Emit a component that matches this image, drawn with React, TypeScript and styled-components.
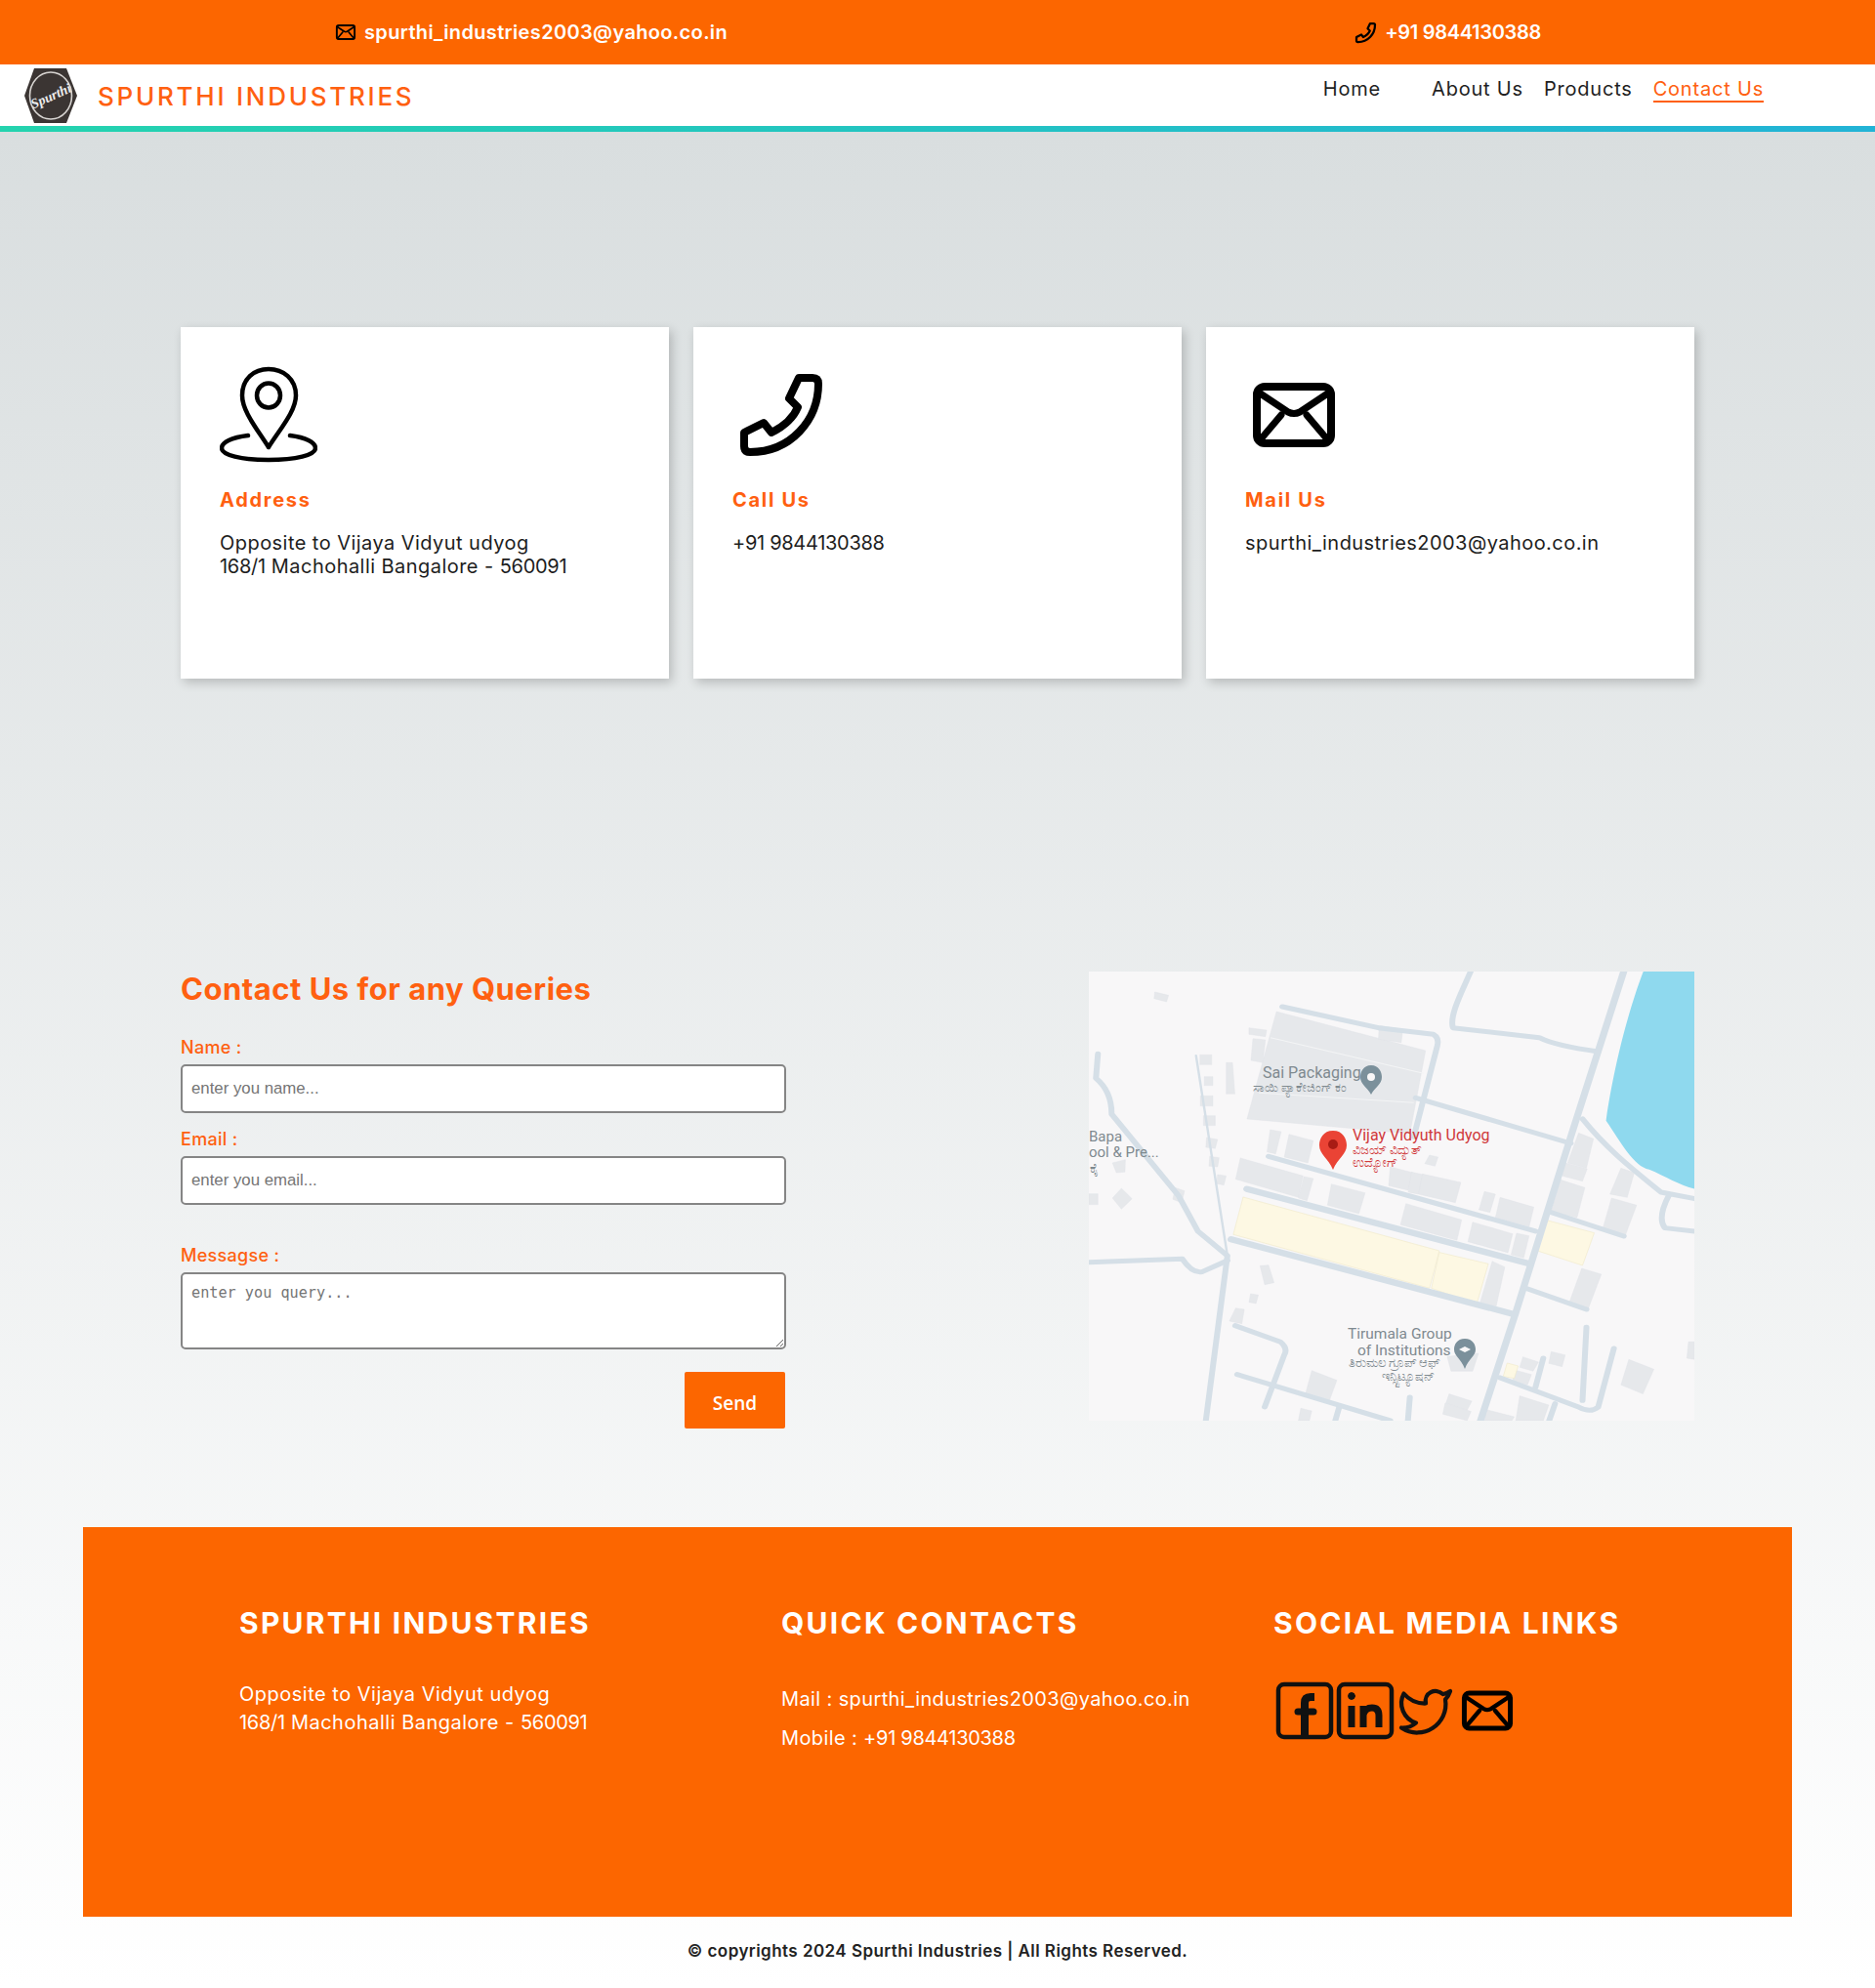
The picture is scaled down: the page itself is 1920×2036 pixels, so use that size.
import styled, { createGlobalStyle } from "styled-components";

const ORANGE = "#fc6600";
const TITLE_ORANGE = "#ff6010";
const BODY_FONT = `Inter, "Open Sans", sans-serif`;

const GlobalStyle = createGlobalStyle`
  html, body {
    margin: 0;
    padding: 0;
  }
  body {
    font-family: ${BODY_FONT};
    color: #1c1c1c;
    background: #fff;
  }
  * {
    box-sizing: border-box;
  }
`;

const Page = styled.div`
  width: 1920px;
  height: 2036px;
  overflow: hidden;
  display: flex;
  flex-direction: column;
`;

// the numbers run narrower than the words in the original face
const Digits = styled.span`
  letter-spacing: -0.3px;
`;

const TopBar = styled.div`
  height: 66px;
  background: ${ORANGE};
  display: flex;
  align-items: center;
  justify-content: space-between;
  padding: 0 342px 0 342px;
`;

const TopItem = styled.a`
  display: flex;
  align-items: center;
  gap: 7px;
  color: #fff;
  font-size: 20px;
  font-weight: 600;
  letter-spacing: 0.35px;
`;

const NavBar = styled.nav`
  height: 69px;
  background: #fff;
  border-bottom: 6px solid;
  border-image: linear-gradient(90deg, #24d3ae, #22b3d6) 1;
  display: flex;
  align-items: flex-start;
  justify-content: space-between;
  padding: 3px 114px 0 25px;
`;

const Brand = styled.div`
  display: flex;
  align-items: center;
  gap: 21px;
`;

const BrandName = styled.div`
  color: ${TITLE_ORANGE};
  font-size: 26px;
  font-weight: 500;
  letter-spacing: 2.75px;
`;

const NavLinks = styled.ul`
  list-style: none;
  margin: 0;
  padding: 10px 0 0;
  display: flex;
  gap: 21px;
`;

const NavLink = styled.li<{ $active?: boolean; $wide?: boolean }>`
  font-size: 20px;
  font-weight: 400;
  line-height: 24px;
  letter-spacing: 0.8px;
  color: ${(p) => (p.$active ? TITLE_ORANGE : "#1f1f1f")};
  border-bottom: 2px solid ${(p) => (p.$active ? TITLE_ORANGE : "transparent")};
  margin-right: ${(p) => (p.$wide ? "31px" : "0")};
`;

const Main = styled.main`
  flex: 1;
  display: flex;
  flex-direction: column;
  background: linear-gradient(180deg, #d9dedf 0%, #ffffff 100%);
  padding-top: 200px;
`;

const Cards = styled.section`
  display: grid;
  grid-template-columns: repeat(3, 500px);
  gap: 25px;
  padding-left: 185px;
`;

const Card = styled.article`
  height: 360px;
  background: #fff;
  box-shadow: 3px 4px 10px rgba(0, 0, 0, 0.2);
  padding: 40px;
`;

const CardTitle = styled.h3`
  margin: 23px 0 0;
  color: ${TITLE_ORANGE};
  font-size: 20px;
  font-weight: 700;
  line-height: 28px;
  letter-spacing: 1.7px;
`;

const CardText = styled.p`
  margin: 18px 0 0;
  font-size: 20px;
  font-weight: 400;
  line-height: 24px;
  letter-spacing: 0.45px;
  color: #1d1d1d;
`;

const IconBox = styled.svg<{ $tone?: string }>`
  display: block;
  fill: none;
  stroke: ${(p) => p.$tone ?? "#000"};
  stroke-linejoin: round;
  stroke-linecap: round;
`;

const QuerySection = styled.section`
  display: flex;
  justify-content: space-between;
  align-items: flex-start;
  margin-top: 300px;
  padding: 0 185px;
`;

const QueryForm = styled.form`
  width: 620px;
  display: flex;
  flex-direction: column;
`;

const QueryTitle = styled.h2`
  margin: 0 0 30px;
  color: ${TITLE_ORANGE};
  font-size: 31px;
  font-weight: 700;
  line-height: 36px;
  letter-spacing: 0.5px;
`;

const FieldLabel = styled.label<{ $gap?: number }>`
  color: ${TITLE_ORANGE};
  font-size: 18px;
  font-weight: 500;
  line-height: 24px;
  letter-spacing: 0.3px;
  margin-top: ${(p) => p.$gap ?? 0}px;
  margin-bottom: 5px;
`;

const TextField = styled.input`
  width: 620px;
  height: 50px;
  border: 2px solid #858585;
  border-radius: 5px;
  background: #fff;
  padding: 0 9px;
  font-family: "Liberation Sans", Arial, sans-serif;
  font-size: 16.8px;
  outline: none;
  &::placeholder {
    color: #757575;
  }
`;

const TextBox = styled.textarea`
  width: 620px;
  height: 79px;
  display: block;
  border: 2px solid #858585;
  border-radius: 5px;
  background: #fff;
  padding: 10px 9px;
  font-family: "DejaVu Sans Mono", monospace;
  font-size: 15.2px;
  line-height: 19px;
  outline: none;
  &::placeholder {
    color: #757575;
  }
`;

const SendButton = styled.button`
  align-self: flex-end;
  width: 103px;
  height: 58px;
  margin: 23px 1px 0 0;
  border: none;
  border-radius: 2px;
  background: ${ORANGE};
  color: #fff;
  font-family: "Open Sans", sans-serif;
  font-size: 19px;
  font-weight: 600;
  padding-top: 6px;
`;

const MapFrame = styled.svg`
  display: block;
  width: 620px;
  height: 460px;
  background: #f8f7f8;
`;

const MapRoads = styled.g`
  fill: none;
  stroke: #d5dfe7;
  stroke-width: 15;
  stroke-linecap: round;
  stroke-linejoin: round;
`;

const MapBuildings = styled.g`
  fill: #e6e8eb;
  stroke: #dfe2e6;
  stroke-width: 1;
`;

const MapLots = styled.g`
  fill: #fdf8e3;
  stroke: #efe8c4;
  stroke-width: 1.5;
`;

const MapLabel = styled.text<{ $red?: boolean; $size?: number }>`
  font-family: Roboto, "Liberation Sans", sans-serif;
  font-size: ${(p) => p.$size ?? 15}px;
  fill: ${(p) => (p.$red ? "#d0393b" : "#7f8a90")};
`;

const FooterPanel = styled.footer`
  width: 1750px;
  height: 399px;
  margin: 101px 0 0 85px;
  background: ${ORANGE};
  display: grid;
  grid-template-columns: 555px 504px 1fr;
  padding: 75px 0 0 160px;
  color: #fff;
`;

const FooterHeading = styled.h3`
  margin: 0;
  font-size: 30px;
  font-weight: 700;
  line-height: 46px;
  letter-spacing: 2.25px;
  white-space: nowrap;
`;

const FooterAddress = styled.p`
  margin: 36px 0 0;
  font-size: 20px;
  line-height: 29px;
  letter-spacing: 0.5px;
`;

const FooterLines = styled.div`
  margin-top: 41px;
  display: flex;
  flex-direction: column;
  gap: 11px;
  font-size: 20px;
  line-height: 29px;
  letter-spacing: 0.38px;
`;

const SocialRow = styled.div`
  display: flex;
  align-items: center;
  margin: 36px 0 0 2px;
  gap: 2px;
`;

const Copyright = styled.div`
  text-align: center;
  margin-top: 23px;
  font-size: 17px;
  font-weight: 600;
  line-height: 24px;
  letter-spacing: 0.45px;
  color: #222;
`;

const LogoMark = () => (
  <svg width="54" height="58" viewBox="0 0 54 58">
    <polygon points="0,29 10,1 43,1 54,29 43,57 10,57" fill="#3b3533" />
    <ellipse cx="27" cy="29" rx="21.5" ry="24" fill="#3b3533" stroke="#d8d5d2" strokeWidth="1.6" />
    <text
      x="27"
      y="34"
      textAnchor="middle"
      fontFamily="'Liberation Serif', serif"
      fontStyle="italic"
      fontWeight="700"
      fontSize="14"
      fill="#eee"
      transform="rotate(-24 27 29)"
    >
      Spurthi
    </text>
  </svg>
);

const MailIcon = ({ size = 100 }: { size?: number }) => (
  <IconBox width={size} height={size} viewBox="0 0 100 100">
    <rect x="12" y="21" width="76" height="58" rx="8" strokeWidth="8" />
    <path d="M14 27 L44 47 Q50 50 56 47 L86 27" strokeWidth="7" />
    <path d="M15 76 L37 50 M85 76 L63 50" strokeWidth="7" />
  </IconBox>
);

const PhoneIcon = ({ size = 100, weight = 8 }: { size?: number; weight?: number }) => (
  <IconBox width={size} height={size} viewBox="0 0 100 100">
    <path
      d="M68 12 H82 Q88 12 88 18 C88 55 60 88 18 88 Q12 88 12 82 V68 L32 58 L40 68 C52 62 62 54 67 42 L58 33 Z"
      strokeWidth={weight}
    />
  </IconBox>
);

const PinIcon = () => (
  <IconBox width="100" height="100" viewBox="0 0 100 100">
    <path d="M50 83 C38 64 23 46 23 30 C23 13 35 3 50 3 C65 3 78 13 78 30 C78 46 62 64 50 83 Z" strokeWidth="4.5" />
    <ellipse cx="50" cy="30" rx="12" ry="12.5" strokeWidth="4.5" />
    <path d="M29 71 C12 73 2 78 2 84 C2 91 22 96 50 96 C78 96 98 91 98 84 C98 78 88 73 72 71" strokeWidth="4.5" />
  </IconBox>
);

const FacebookIcon = () => (
  <IconBox width="60" height="60" viewBox="0 0 60 60" $tone="#111">
    <rect x="3" y="3" width="54" height="54" rx="6" strokeWidth="4.5" />
    <path d="M40 16 H36 Q30 16 30 22 V56" strokeWidth="8" strokeLinecap="butt" />
    <path d="M23 31 H39" strokeWidth="7" />
  </IconBox>
);

const LinkedinIcon = () => (
  <IconBox width="60" height="60" viewBox="0 0 60 60" $tone="#111">
    <rect x="3" y="3" width="54" height="54" rx="6" strokeWidth="4.5" />
    <circle cx="16" cy="15" r="3.4" fill="#111" strokeWidth="1" />
    <path d="M16 25 V47" strokeWidth="7" strokeLinecap="butt" />
    <path d="M28 47 V25 M28 34 Q30 27 37 27 Q44 27 44 35 V47" strokeWidth="7" strokeLinecap="butt" />
  </IconBox>
);

const TwitterIcon = () => (
  <IconBox width="60" height="60" viewBox="0 0 24 24" $tone="#111">
    <path
      d="M22 4s-.7 2.1-2 3.4c1.600 10-9.400 17.300-18 11.600 2.200.1 4.400-.6 6-2C3 15.500.5 9.600 3 5c2.200 2.600 5.600 4.100 9 4-.9-4.200 4-6.600 7-3.800 1.100 0 3-1.200 3-1.200z"
      strokeWidth="1.7"
    />
  </IconBox>
);

// the map is a picture in the reference, traced by hand. coords are from the zoomed crop
const LocationMap = () => (
  <MapFrame viewBox="0 0 620 460">
    <g transform="translate(-4.8 -4) scale(0.4018 0.3333)">
      <path d="M1425 12 C1390 120 1350 300 1330 470 C1370 540 1400 610 1440 620 C1480 640 1520 670 1556 680 V12 Z" fill="#8fd9ee" />
      <MapBuildings>
        <polygon points="490,135 870,255 830,510 415,465" />
        <polygon points="180,75 215,85 210,105 178,95" />
        <polygon points="420,185 465,192 462,212 420,205" />
        <polygon points="430,218 462,222 455,292 425,285" />
        <polygon points="752,178 812,190 808,230 750,220" />
        <polygon points="362,292 378,292 384,388 362,388" />
        <polygon points="295,268 325,268 325,298 295,298" />
        <polygon points="306,335 328,335 328,362 306,362" />
        <polygon points="296,394 328,394 328,425 296,425" />
        <polygon points="304,455 334,455 334,485 304,485" />
        <polygon points="312,522 340,528 334,556 310,552" />
        <polygon points="320,580 344,584 340,612 318,610" />
        <polygon points="340,636 362,640 356,668 338,664" />
        <polygon points="72,600 105,590 104,628 82,630" />
        <polygon points="95,678 122,710 95,742 72,708" />
        <polygon points="12,695 35,695 35,728 12,728" />
        <polygon points="474,498 502,504 488,572 466,566" />
        <polygon points="522,512 584,532 570,600 510,582" />
        <polygon points="398,585 558,640 546,706 386,650" />
        <polygon points="560,642 584,648 568,716 546,708" />
        <polygon points="630,665 716,692 700,756 620,730" />
        <polygon points="780,612 838,630 826,684 776,670" />
        <polygon points="834,628 864,636 852,696 826,690" />
        <polygon points="862,634 960,660 946,722 852,696" />
        <polygon points="820,725 962,775 950,838 806,790" />
        <polygon points="1020,688 1048,696 1034,752 1006,744" />
        <polygon points="1060,706 1146,736 1134,796 1048,768" />
        <polygon points="990,782 1092,818 1080,876 978,842" />
        <polygon points="1102,816 1134,824 1120,892 1088,882" />
        <polygon points="1040,902 1072,920 1050,1040 1008,1034" />
        <polygon points="448,916 470,914 484,968 460,974" />
        <polygon points="424,1002 444,1006 438,1032 420,1028" />
        <polygon points="386,1046 408,1050 402,1094 370,1086" />
        <polygon points="1260,508 1298,526 1280,616 1232,600" />
        <polygon points="1226,600 1282,618 1270,656 1218,640" />
        <polygon points="1214,652 1276,676 1256,768 1190,748" />
        <polygon points="1368,616 1402,630 1384,706 1340,696" />
        <polygon points="1344,708 1408,730 1378,826 1322,800" />
        <polygon points="1268,924 1318,942 1284,1050 1236,1030" />
        <polygon points="880,576 902,582 894,610 868,602" />
        <polygon points="1388,1204 1452,1234 1424,1310 1368,1282" />
        <polygon points="1190,1180 1226,1190 1218,1226 1184,1216" />
        <polygon points="1118,1196 1158,1212 1144,1240 1110,1228" />
        <polygon points="1096,1236 1140,1250 1130,1282 1092,1270" />
        <polygon points="580,1238 644,1268 622,1340 564,1310" />
        <polygon points="1110,1316 1184,1344 1170,1392 1100,1392" />
        <polygon points="930,1310 988,1332 976,1360 922,1338" />
        <polygon points="920,1338 986,1364 976,1392 914,1372" />
        <polygon points="1024,1358 1096,1380 1090,1392 1020,1392" />
        <polygon points="552,1354 580,1362 574,1392 546,1392" />
        <polygon points="1540,1150 1556,1150 1556,1204 1536,1200" />
        <polygon points="232,676 256,686 248,722 226,712" />
        <polygon points="925,1195 1005,1185 990,1240 935,1240" />
      </MapBuildings>
      <path d="M475 215 L865 325 M445 385 L840 415" stroke="#f3f4f5" strokeWidth="3" fill="none" />
      <MapLots>
        <polygon points="405,705 905,870 880,985 380,820" />
        <polygon points="905,875 1030,910 1000,1035 885,985" />
        <polygon points="1175,775 1300,815 1270,915 1155,870" />
        <polygon points="1078,1215 1106,1224 1096,1262 1068,1256" />
      </MapLots>
      <MapRoads>
        <path d="M985 12 C960 80 930 150 940 185 L1160 215 Q1200 240 1310 258" />
        <path d="M1375 12 L1240 520 L1100 1060 L1010 1392" strokeWidth="18" />
        <path d="M505 120 L750 185 L890 205 Q905 215 900 240 L840 520" />
        <path d="M845 400 L1240 540" />
        <path d="M1270 465 C1340 570 1420 640 1470 690 L1556 710" />
        <path d="M1490 700 Q1460 770 1480 800 L1556 810" />
        <path d="M470 580 L1150 810" />
        <path d="M415 680 L1135 910" strokeWidth="19" />
        <path d="M375 835 L1095 1065" strokeWidth="19" />
        <path d="M1185 750 L1375 825" />
        <path d="M1125 985 L1280 1050" />
        <path d="M35 265 L30 340 Q70 380 70 450 L240 700 L290 810 L365 885 L310 1392" />
        <path d="M285 270 L365 885" strokeWidth="6" />
        <path d="M12 905 L250 895 Q275 940 300 935 L365 900" />
        <path d="M385 1100 L500 1150 Q520 1170 510 1190 L460 1350" />
        <path d="M390 1250 L780 1392" />
        <path d="M1280 1105 L1270 1330" />
        <path d="M1350 1170 L1310 1350 Q1290 1370 1260 1350 L1060 1260" />
        <path d="M830 1320 L825 1392" />
        <path d="M650 1350 L640 1392" />
        <path d="M1170 1200 L1150 1290" />
        <path d="M1200 1340 L1185 1392" />
      </MapRoads>
    </g>
    <path d="M289 96 c-8 0 -11 7 -11 12 c0 8 7 10 11 18 c4 -8 11 -10 11 -18 c0 -5 -3 -12 -11 -12 z" fill="#7b909b" />
    <circle cx="289" cy="108" r="4" fill="#f8f7f8" />
    <path d="M250 163 c-10 0 -14 8 -14 15 c0 9 9 13 14 25 c5 -12 14 -16 14 -25 c0 -7 -4 -15 -14 -15 z" fill="#ea4335" />
    <circle cx="250" cy="177" r="5" fill="#a91b14" />
    <path d="M385 376 c-8 0 -11 6 -11 11 c0 7 7 9 11 20 c4 -11 11 -13 11 -20 c0 -5 -3 -11 -11 -11 z" fill="#7b909b" />
    <path d="M379 387 l6 -3 l6 3 l-6 3 z" fill="#f8f7f8" />
    <MapLabel x="178" y="109" $size={16}>Sai Packaging</MapLabel>
    <MapLabel x="168" y="123" $size={13}>ಸಾಯಿ ಪ್ಯಾಕೇಜಿಂಗ್ ಕಂ</MapLabel>
    <MapLabel x="270" y="173" $red $size={16}>Vijay Vidyuth Udyog</MapLabel>
    <MapLabel x="270" y="187" $red $size={13}>ವಿಜಯ್ ವಿದ್ಯುತ್</MapLabel>
    <MapLabel x="270" y="200" $red $size={13}>ಉದ್ಯೋಗ್</MapLabel>
    <MapLabel x="0" y="174" $size={15}>Bapa</MapLabel>
    <MapLabel x="0" y="190" $size={15}>ool &amp; Pre...</MapLabel>
    <MapLabel x="1" y="206" $size={13}>ಕೈ</MapLabel>
    <MapLabel x="265" y="376" $size={15.5}>Tirumala Group</MapLabel>
    <MapLabel x="275" y="393" $size={15.5}>of Institutions</MapLabel>
    <MapLabel x="266" y="405" $size={13}>ತಿರುಮಲ ಗ್ರೂಪ್ ಆಫ್</MapLabel>
    <MapLabel x="300" y="419" $size={13}>ಇನ್ಸ್ಟಿಟ್ಯೂಷನ್</MapLabel>
  </MapFrame>
);

export default function App() {
  return (
    <Page>
      <GlobalStyle />
      <TopBar>
        <TopItem>
          <MailIcon size={24} />
          spurthi_industries2003@yahoo.co.in
        </TopItem>
        <TopItem>
          <PhoneIcon size={25} weight={9} />
          <Digits>+91 9844130388</Digits>
        </TopItem>
      </TopBar>
      <NavBar>
        <Brand>
          <LogoMark />
          <BrandName>SPURTHI INDUSTRIES</BrandName>
        </Brand>
        <NavLinks>
          <NavLink $wide>Home</NavLink>
          <NavLink>About Us</NavLink>
          <NavLink>Products</NavLink>
          <NavLink $active>Contact Us</NavLink>
        </NavLinks>
      </NavBar>
      <Main>
        <Cards>
          <Card>
            <PinIcon />
            <CardTitle>Address</CardTitle>
            <CardText>
              Opposite to Vijaya Vidyut udyog
              <br />
              <Digits>168/1</Digits> Machohalli Bangalore - <Digits>560091</Digits>
            </CardText>
          </Card>
          <Card>
            <PhoneIcon />
            <CardTitle>Call Us</CardTitle>
            <CardText>
              <Digits>+91 9844130388</Digits>
            </CardText>
          </Card>
          <Card>
            <MailIcon />
            <CardTitle>Mail Us</CardTitle>
            <CardText>spurthi_industries2003@yahoo.co.in</CardText>
          </Card>
        </Cards>
        <QuerySection>
          <QueryForm>
            <QueryTitle>Contact Us for any Queries</QueryTitle>
            <FieldLabel>Name :</FieldLabel>
            <TextField placeholder="enter you name..." />
            <FieldLabel $gap={15}>Email :</FieldLabel>
            <TextField placeholder="enter you email..." />
            <FieldLabel $gap={40}>Messagse :</FieldLabel>
            <TextBox placeholder="enter you query..." />
            <SendButton type="button">Send</SendButton>
          </QueryForm>
          <LocationMap />
        </QuerySection>
        <FooterPanel>
          <div>
            <FooterHeading>SPURTHI INDUSTRIES</FooterHeading>
            <FooterAddress>
              Opposite to Vijaya Vidyut udyog
              <br />
              <Digits>168/1</Digits> Machohalli Bangalore - <Digits>560091</Digits>
            </FooterAddress>
          </div>
          <div>
            <FooterHeading>QUICK CONTACTS</FooterHeading>
            <FooterLines>
              <span>Mail : spurthi_industries2003@yahoo.co.in</span>
              <span>
                Mobile : <Digits>+91 9844130388</Digits>
              </span>
            </FooterLines>
          </div>
          <div>
            <FooterHeading>SOCIAL MEDIA LINKS</FooterHeading>
            <SocialRow>
              <FacebookIcon />
              <LinkedinIcon />
              <TwitterIcon />
              <MailIcon size={62} />
            </SocialRow>
          </div>
        </FooterPanel>
        <Copyright>© copyrights 2024 Spurthi Industries | All Rights Reserved.</Copyright>
      </Main>
    </Page>
  );
}
